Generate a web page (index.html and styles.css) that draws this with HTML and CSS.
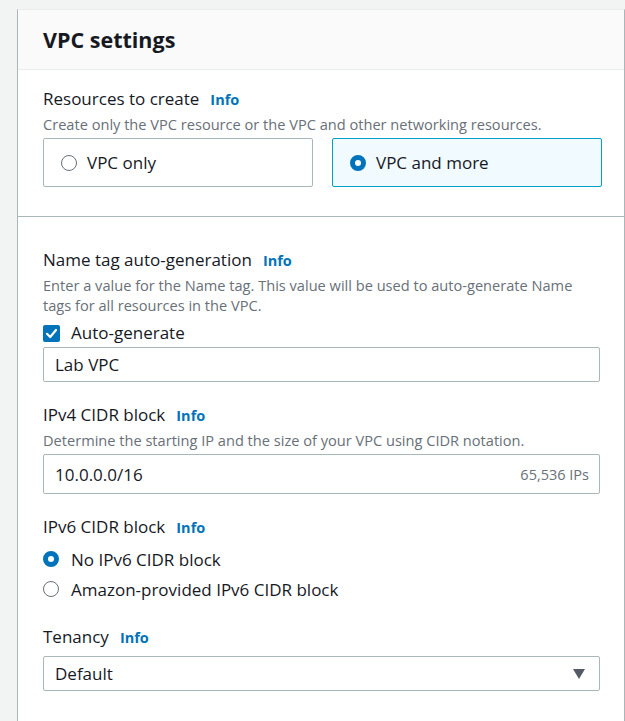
FILE: index.html
```html
<!DOCTYPE html>
<html lang="en">
<head>
<meta charset="utf-8">
<title>VPC settings</title>
<link rel="stylesheet" href="styles.css">
</head>
<body>
<div class="card">
  <div class="card-header"><h2>VPC settings</h2></div>

  <div class="section first">
    <div class="label">Resources to create <a class="info">Info</a></div>
    <div class="desc">Create only the VPC resource or the VPC and other networking resources.</div>
    <div class="tiles">
      <div class="tile">
        <span class="radio"></span><span>VPC only</span>
      </div>
      <div class="tile selected">
        <span class="radio checked"></span><span>VPC and more</span>
      </div>
    </div>
  </div>

  <div class="section second">
    <div class="field">
      <div class="label">Name tag auto-generation <a class="info">Info</a></div>
      <div class="desc">Enter a value for the Name tag. This value will be used to auto-generate Name tags for all resources in the VPC.</div>
      <div class="check-row">
        <span class="checkbox"><svg viewBox="0 0 17 17" width="17" height="17"><path d="M4 8.8 L7.2 12 L13 5" fill="none" stroke="#fff" stroke-width="2.2" stroke-linecap="round" stroke-linejoin="round"/></svg></span>
        <span>Auto-generate</span>
      </div>
      <div class="input">Lab VPC</div>
    </div>

    <div class="field">
      <div class="label">IPv4 CIDR block <a class="info">Info</a></div>
      <div class="desc">Determine the starting IP and the size of your VPC using CIDR notation.</div>
      <div class="input tall"><span>10.0.0.0/16</span><span class="hint">65,536 IPs</span></div>
    </div>

    <div class="field">
      <div class="label">IPv6 CIDR block <a class="info">Info</a></div>
      <div class="radio-list">
        <div class="radio-row"><span class="radio checked"></span><span>No IPv6 CIDR block</span></div>
        <div class="radio-row"><span class="radio"></span><span>Amazon-provided IPv6 CIDR block</span></div>
      </div>
    </div>

    <div class="field">
      <div class="label">Tenancy <a class="info">Info</a></div>
      <div class="input select"><span>Default</span><span class="caret"></span></div>
    </div>
  </div>
</div>
</body>
</html>
```

FILE: styles.css
```css
html, body {
  margin: 0;
  padding: 0;
}
body {
  background: #f2f3f3;
  font-family: "Open Sans", "Noto Sans", sans-serif;
  color: #16191f;
  padding: 9px 0 0 17px;
  height: 721px;
  box-sizing: border-box;
  overflow: hidden;
}
.card {
  background: #ffffff;
  border: 1px solid #d5dbdb;
  border-left-color: #aab7b8;
  border-right-color: #aab7b8;
  border-top-color: #eaeded;
  border-bottom: none;
  height: 100%;
  box-sizing: border-box;
}
.card-header {
  background: #fafafa;
  border-bottom: 1px solid #eaeded;
  height: 59px;
  padding: 0 25px;
  display: flex;
  align-items: center;
}
.card-header h2 {
  margin: 0;
  font-size: 21.5px;
  font-weight: 700;
  line-height: 26px;
}
.section {
  padding: 0 24px 0 25px;
}
.section.first {
  padding-top: 18px;
  padding-bottom: 29px;
  border-bottom: 1px solid #aab7b8;
}
.section.second {
  padding-top: 32px;
  display: flex;
  flex-direction: column;
  gap: 22px;
}
.label {
  font-size: 17px;
  line-height: 22px;
  display: flex;
  align-items: baseline;
  gap: 11px;
}
.info {
  color: #0073bb;
  font-weight: 700;
  font-size: 14.5px;
}
.desc {
  font-size: 14.6px;
  line-height: 20px;
  color: #687078;
  margin-top: 3px;
}
.tiles {
  margin-top: 4px;
  display: grid;
  grid-template-columns: 270px 270px;
  gap: 19px;
}
.tile {
  height: 49px;
  box-sizing: border-box;
  border: 1px solid #aab7b8;
  border-radius: 2px;
  display: flex;
  align-items: center;
  padding-left: 17px;
  gap: 10px;
  font-size: 17px;
}
.tile.selected {
  background: #f1faff;
  border-color: #00a1c9;
}
.radio {
  width: 16px;
  height: 16px;
  box-sizing: border-box;
  border-radius: 50%;
  border: 1.5px solid #687078;
  background: #fff;
  flex: none;
}
.radio.checked {
  border: 5px solid #0073bb;
}
.check-row {
  margin-top: 7px;
  display: flex;
  align-items: center;
  gap: 11px;
  font-size: 17px;
  line-height: 22px;
}
.checkbox {
  width: 17px;
  height: 17px;
  border-radius: 2px;
  background: #0073bb;
  display: flex;
  flex: none;
}
.input {
  margin-top: 3px;
  height: 35px;
  box-sizing: border-box;
  border: 1px solid #aab7b8;
  border-radius: 2px;
  padding: 0 10px 0 11px;
  display: flex;
  align-items: center;
  justify-content: space-between;
  font-size: 17px;
}
.input.tall {
  height: 40px;
  margin-top: 4px;
}
.hint {
  font-size: 14.5px;
  color: #687078;
}
.select {
  margin-top: 7px;
  padding-right: 14px;
}
.caret {
  width: 0;
  height: 0;
  border-left: 6.5px solid transparent;
  border-right: 6.5px solid transparent;
  border-top: 10px solid #545b64;
}
.radio-list {
  margin-top: 5px;
  display: flex;
  flex-direction: column;
}
.radio-row {
  display: flex;
  align-items: center;
  gap: 12px;
  height: 30px;
  font-size: 17px;
}
```
